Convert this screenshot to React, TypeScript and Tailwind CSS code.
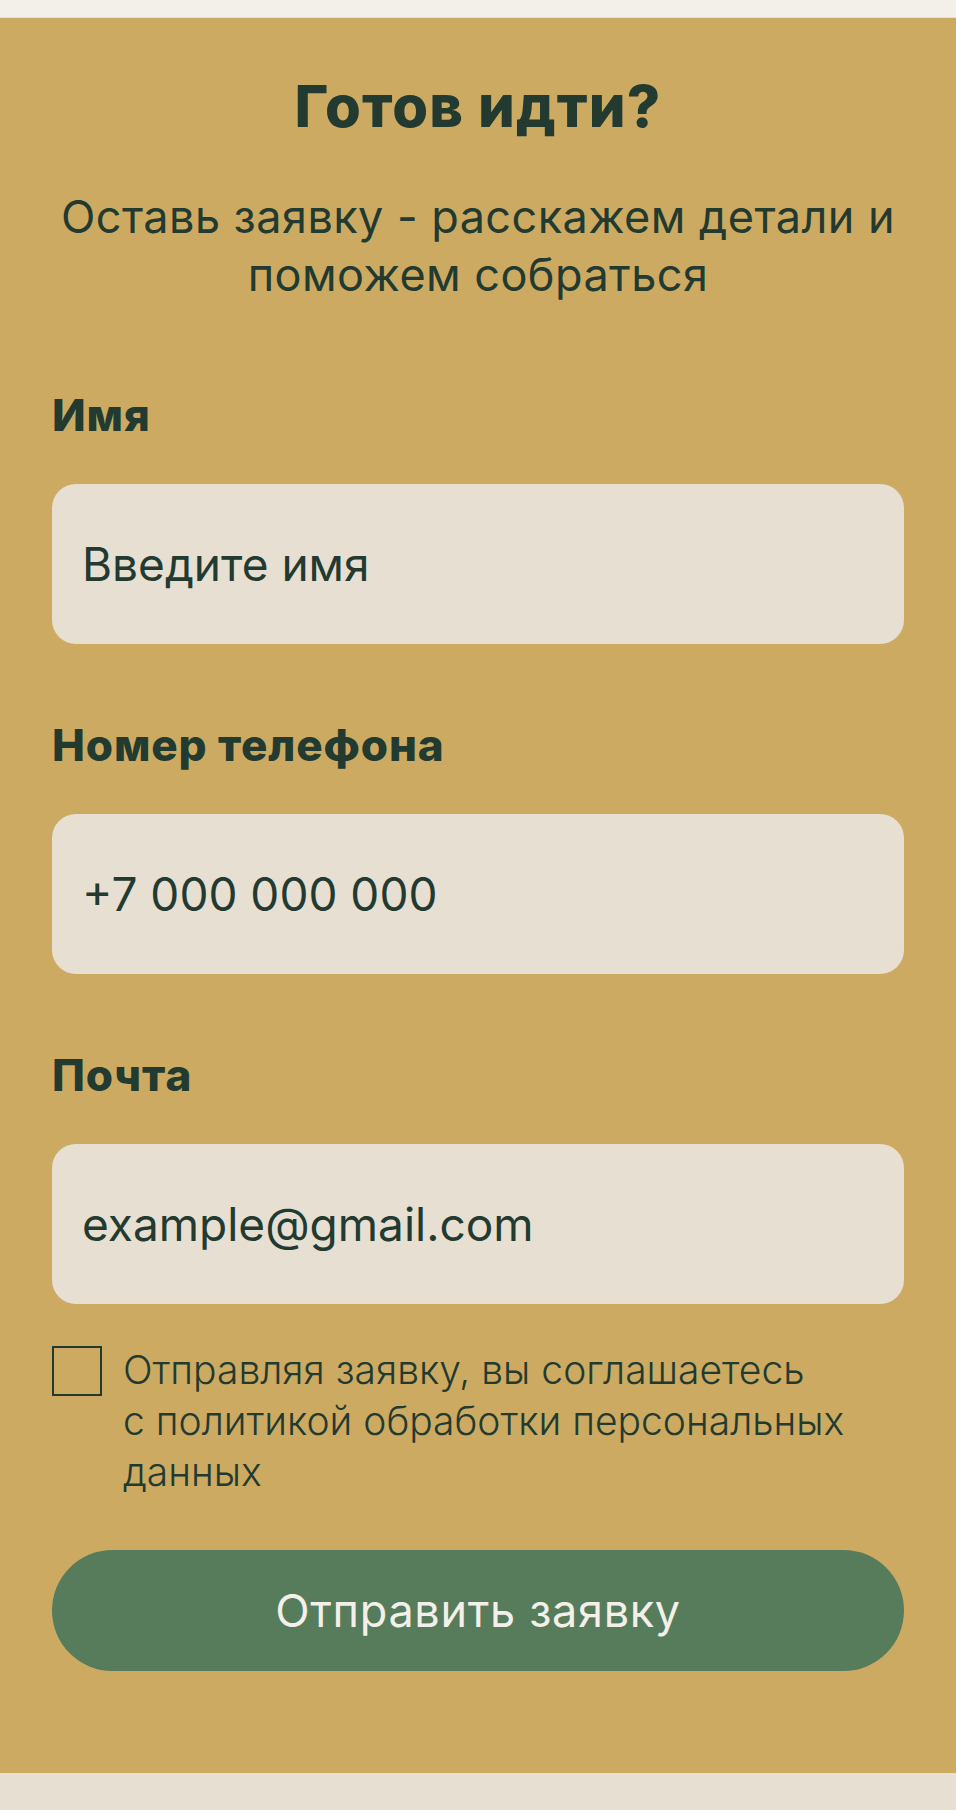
const fieldClass =
  "block h-[160px] w-full rounded-[24px] bg-[#e7dfd2] px-[30px] text-[46px] text-[#223a30] outline-none placeholder:text-[#223a30]";

function Field({ label, placeholder, type, first }: { label: string; placeholder: string; type: string; first?: boolean }) {
  return (
    <label className={first ? "mt-[89px] block" : "mt-[79px] block"}>
      <span className="block text-[44px] font-extrabold leading-none tracking-[0.02em] text-[#223a30]">{label}</span>
      <input type={type} placeholder={placeholder} className={"mt-[47px] " + fieldClass} />
    </label>
  );
}

export default function App() {
  return (
    <div className="min-h-[1810px] bg-[#e7dfd2] font-['Inter','Noto_Sans',sans-serif]">
      <div className="h-[18px] border-b border-[#eadfcc] bg-[#f3efe9]" />
      <section className="bg-[#ccaa62] px-[52px] pb-[102px] pt-[59px] text-[#223a30]">
        <h2 className="text-center text-[58px] font-extrabold leading-none tracking-[0.02em]">Готов идти?</h2>
        <p className="mt-[53px] text-center text-[45px] leading-[58px] tracking-[0.01em]">
          Оставь заявку - расскажем детали и
          <br />
          поможем собраться
        </p>

        <form onSubmit={(e) => e.preventDefault()}>
          <Field first label="Имя" placeholder="Введите имя" type="text" />
          <Field label="Номер телефона" placeholder="+7 000 000 000" type="tel" />
          <Field label="Почта" placeholder="example@gmail.com" type="email" />

          <label className="mt-[40px] flex items-start gap-[21px]">
            <input
              type="checkbox"
              className="mt-[2px] h-[50px] w-[50px] shrink-0 appearance-none border-2 border-[#223a30] bg-transparent"
            />
            <span className="text-[39px] font-light leading-[51px]">
              Отправляя заявку, вы соглашаетесь
              <br />
              с политикой обработки персональных данных
            </span>
          </label>

          <button
            type="submit"
            className="mt-[53px] flex h-[121px] w-full items-center justify-center rounded-full bg-[#567c5c] text-[45px] tracking-[0.015em] text-[#f3efe9]"
          >
            Отправить заявку
          </button>
        </form>
      </section>
    </div>
  );
}
